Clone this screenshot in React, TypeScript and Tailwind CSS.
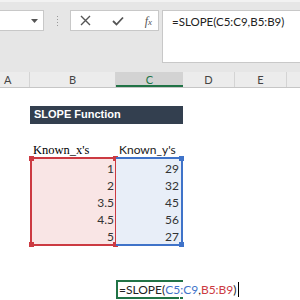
import React from 'react';

const sans = "font-['Lato','Liberation_Sans',sans-serif]";

function Corner({ pos, color }: { pos: string; color: string }) {
  return <span className={`absolute w-[5px] h-[5px] ${color} ${pos}`} />;
}

function Row({ children, h = 'h-[17px]' }: { children?: React.ReactNode; h?: string }) {
  return <div className={`flex ${h}`}>{children}</div>;
}

export default function App() {
  const xs = ['1', '2', '3.5', '4.5', '5'];
  const ys = ['29', '32', '45', '56', '27'];

  return (
    <div className={`w-[300px] h-[300px] overflow-hidden bg-white ${sans} text-[#222]`}>
      {/* ribbon / formula bar */}
      <div className="h-[72px] bg-[#e6e6e6]">
        <div className="h-[2px] bg-[#f2f2f2]" />
        <div className="flex items-start pt-[8px]">
          <div className="w-[44px] h-[21px] bg-white border border-l-0 border-[#c8c8c8] flex items-center justify-end pr-[5px]">
            <svg width="7" height="4" viewBox="0 0 7 4"><path d="M0 0h7L3.5 4z" fill="#555" /></svg>
          </div>
          <div className="w-[26px] h-[21px] flex flex-col items-center justify-center gap-[2px]">
            <span className="w-[1px] h-[1px] bg-[#999]" />
            <span className="w-[1px] h-[1px] bg-[#999]" />
            <span className="w-[1px] h-[1px] bg-[#999]" />
            <span className="w-[1px] h-[1px] bg-[#999]" />
          </div>
          <div className="w-[89px] h-[21px] bg-white border border-[#c8c8c8] flex items-center justify-between pl-[9px] pr-[6px]">
            <svg width="11" height="11" viewBox="0 0 11 11"><path d="M1 1l9 9M10 1l-9 9" stroke="#555" strokeWidth="1.4" /></svg>
            <svg width="12" height="10" viewBox="0 0 12 10"><path d="M1 5l3.5 3.5L11 1.5" stroke="#555" strokeWidth="1.8" fill="none" /></svg>
            <span className="font-['Liberation_Serif',serif] italic text-[12px] text-[#555] leading-none">f<span className="text-[9px]">x</span></span>
          </div>
          <div className="w-[3px]" />
          <div className="flex-1 h-[53px] bg-white border border-r-0 border-[#c8c8c8] pl-[9px] pt-[4px] text-[11.5px] leading-[14px] text-[#222]">
            =SLOPE(C5:C9,B5:B9)
          </div>
        </div>
      </div>

      {/* column headers */}
      <div className="flex h-[16px] bg-[#ececec] border-b border-[#c6c6c6] text-[11px] text-[#444]">
        <div className="w-[30px] border-r border-[#d4d4d4] pl-[4px] leading-[15px]">A</div>
        <div className="w-[86px] border-r border-[#d4d4d4] text-center leading-[15px]">B</div>
        <div className="w-[67px] bg-[#d3d3d3] border-b-2 border-[#217346] text-center leading-[15px] text-[#217346]">C</div>
        <div className="w-[52px] border-r border-[#d4d4d4] text-center leading-[15px]">D</div>
        <div className="w-[52px] border-r border-[#d4d4d4] text-center leading-[15px]">E</div>
        <div className="flex-1" />
      </div>

      {/* sheet */}
      <div className="pt-[1px]">
        <Row />
        <Row h="h-[18px]">
          <div className="w-[30px]" />
          <div className="w-[153px] bg-[#333f4f] text-white font-['Liberation_Sans',sans-serif] font-bold text-[11px] leading-[17px] pl-[4px]">
            SLOPE Function
          </div>
        </Row>
        <Row h="h-[16px]" />
        <Row h="h-[17px]">
          <div className="w-[30px]" />
          <div className="w-[86px] font-['Liberation_Serif',serif] text-[12.5px] leading-[20px] pl-[3px] text-black">Known_x's</div>
          <div className="w-[67px] text-[12px] leading-[20px] pl-[3px]">Known_y's</div>
        </Row>
        <div className="flex">
          <div className="w-[30px]" />
          <div className="relative w-[86px] bg-[#f9e5e5] border-2 border-[#cc3a42] border-r-[1.5px]">
            {xs.map((v) => (
              <div key={v} className="h-[17px] text-right pr-[1px] text-[12px] leading-[19px] text-[#333]">{v}</div>
            ))}
            <Corner pos="-left-[3px] -top-[3px]" color="bg-[#cc3a42]" />
            <Corner pos="-right-[3px] -top-[3px]" color="bg-[#cc3a42]" />
            <Corner pos="-left-[3px] -bottom-[3px]" color="bg-[#cc3a42]" />
            <Corner pos="-right-[3px] -bottom-[3px]" color="bg-[#cc3a42]" />
          </div>
          <div className="relative w-[67px] bg-[#e8eef8] border-2 border-l-0 border-[#3f73c9]">
            {ys.map((v, i) => (
              <div key={i} className="h-[17px] text-right pr-[2px] text-[12px] leading-[19px] text-[#333]">{v}</div>
            ))}
            <Corner pos="-right-[3px] -top-[3px]" color="bg-[#3f73c9]" />
            <Corner pos="-right-[3px] -bottom-[3px]" color="bg-[#3f73c9]" />
          </div>
        </div>
        <Row h="h-[34px]" />
        <Row h="h-[19px]">
          <div className="w-[30px]" />
          <div className="w-[86px]" />
          <div className="relative w-[67px] border-2 border-[#217346]">
            <span className="absolute -right-[3px] -bottom-[3px] w-[5px] h-[5px] bg-[#217346] border border-white" />
            <div className="absolute left-[1px] top-0 whitespace-nowrap bg-white text-[12px] leading-[15px] flex items-center pr-[1px]">
              <span className="text-[#222]">=SLOPE(</span>
              <span className="text-[#3f73c9]">C5:C9</span>
              <span className="text-[#222]">,</span>
              <span className="text-[#cc3a42]">B5:B9</span>
              <span className="text-[#222]">)</span>
              <span className="w-[1px] h-[15px] bg-black ml-[1px]" />
            </div>
          </div>
        </Row>
      </div>
    </div>
  );
}
